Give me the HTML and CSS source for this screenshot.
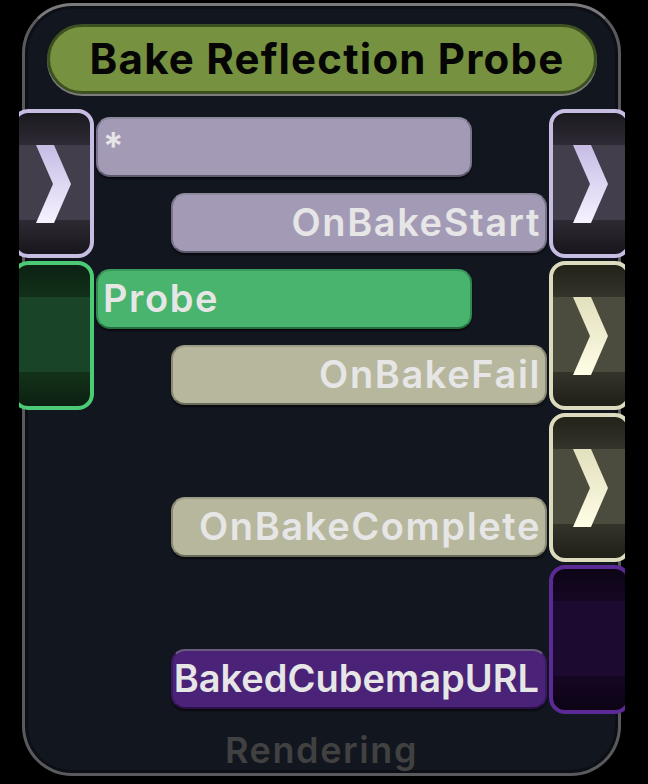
FILE: index.html
```html
<!DOCTYPE html>
<html lang="en">
<head>
    <meta charset="UTF-8">
    <title>Bake Reflection Probe</title>
    <link rel="stylesheet" href="styles.css">
</head>
<body>
<div class="stage">
    <div class="node">
        <div class="title">Bake Reflection Probe</div>
        <div class="ports">
            <div class="col col-in">
                <div class="port port-exec">
                    <svg class="chev" viewBox="0 0 35 78"><defs><linearGradient id="gl" x1="0" y1="0" x2="0" y2="1"><stop offset="0" stop-color="#c6bce4"/><stop offset="1" stop-color="#f6f2ff"/></linearGradient></defs><polygon points="0,0 18,0 35,39 18,78 0,78 17,39" fill="url(#gl)"/></svg>
                </div>
                <div class="port port-probe"></div>
            </div>
            <div class="col col-fields">
                <div class="pill pill-in pill-exec">*</div>
                <div class="pill pill-out pill-exec">OnBakeStart</div>
                <div class="pill pill-in pill-probe">Probe</div>
                <div class="pill pill-out pill-event">OnBakeFail</div>
                <div class="pill-gap"></div>
                <div class="pill pill-out pill-event">OnBakeComplete</div>
                <div class="pill-gap"></div>
                <div class="pill pill-out pill-url">BakedCubemapURL</div>
            </div>
            <div class="col col-out">
                <div class="port port-exec">
                    <svg class="chev" viewBox="0 0 35 78"><polygon points="0,0 18,0 35,39 18,78 0,78 17,39" fill="url(#gl)"/></svg>
                </div>
                <div class="port port-event">
                    <svg class="chev" viewBox="0 0 35 78"><defs><linearGradient id="gk" x1="0" y1="0" x2="0" y2="1"><stop offset="0" stop-color="#e2e0bd"/><stop offset="1" stop-color="#fffde6"/></linearGradient></defs><polygon points="0,0 18,0 35,39 18,78 0,78 17,39" fill="url(#gk)"/></svg>
                </div>
                <div class="port port-event">
                    <svg class="chev" viewBox="0 0 35 78"><polygon points="0,0 18,0 35,39 18,78 0,78 17,39" fill="url(#gk)"/></svg>
                </div>
                <div class="port port-url"></div>
            </div>
        </div>
        <div class="category">Rendering</div>
    </div>
</div>
</body>
</html>
```
FILE: styles.css
```css
html, body {
    margin: 0;
    padding: 0;
    background: #000;
    font-family: Inter, "Open Sans", sans-serif;
}

.stage {
    margin-left: 19px;
    width: 606px;
    height: 784px;
    padding-top: 3px;
    box-sizing: border-box;
    overflow: hidden;
}

.node {
    margin-left: 3px;
    width: 599px;
    height: 773px;
    box-sizing: border-box;
    border: 3px solid #5a5a5c;
    border-top-color: #7a7a7c;
    border-radius: 50px;
    background: #12161f;
    box-shadow: inset 0 0 0 3px #0c0f16;
}

.title {
    margin: 18px 21px 0 22px;
    height: 70px;
    box-sizing: border-box;
    border: 3px solid #3d5020;
    border-radius: 35px;
    background: #76913f;
    box-shadow: 0 2px 0 #7c7c7c;
    color: #050505;
    font-size: 42px;
    font-weight: 700;
    line-height: 63px;
    text-align: center;
    padding-left: 10px;
    letter-spacing: 1.2px;
}

.ports {
    display: grid;
    grid-template-columns: 82px 1fr 82px;
    margin: 15px -13px 0 -13px;
}

.col {
    display: flex;
    flex-direction: column;
}

.col-in, .col-out {
    gap: 3px;
}

.col-fields {
    padding-top: 8px;
    gap: 16px;
}

.port {
    height: 149px;
    box-sizing: border-box;
    border: 4px solid;
    border-radius: 16px;
    display: flex;
    align-items: center;
    justify-content: center;
}

.chev {
    width: 35px;
    height: 78px;
}

.port-exec {
    border-color: #c7bde3;
    background: linear-gradient(to bottom, #1b191f 0%, #2f2b35 23%, #433e4c 23%, #433e4c 76%, #2e2a34 76%, #18161c 100%);
}

.port-probe {
    border-color: #4ccb77;
    background: linear-gradient(to bottom, #0c2213 0%, #123119 23%, #1a4427 23%, #1a4427 76%, #133219 76%, #0b2011 100%);
}

.port-event {
    border-color: #dcdbbd;
    background: linear-gradient(to bottom, #222219 0%, #34342b 23%, #4b4b3e 23%, #4b4b3e 76%, #34342b 76%, #1f1f18 100%);
}

.port-url {
    border-color: #5b2a96;
    background: linear-gradient(to bottom, #0d0517 0%, #150724 23%, #1d0a31 23%, #1d0a31 76%, #150724 76%, #0c0415 100%);
}

.pill {
    width: 376px;
    height: 60px;
    box-sizing: border-box;
    border: 2px solid;
    border-radius: 14px;
    box-shadow: 0 2px 2px rgba(0, 0, 0, 0.6);
    color: #e6e6e6;
    font-size: 38px;
    font-weight: 600;
    line-height: 55px;
    letter-spacing: 1.6px;
    white-space: nowrap;
}

.pill-gap {
    height: 60px;
}

.pill-in {
    margin-left: 2px;
    padding-left: 5px;
}

.pill-out {
    margin-left: auto;
    margin-right: 2px;
    padding-right: 4px;
    text-align: right;
}

.pill-exec {
    background: #a39bb6;
    border-color: #8e8aa0 #7a748c #5e586c;
}

.pill-probe {
    background: #48b46d;
    border-color: #3a9a5c #2f8a50 #256e40;
}

.pill-event {
    background: #b7b79d;
    border-color: #9c9c88 #8a8a76 #6c6c5c;
}

.pill-url {
    background: #4a2277;
    border-color: #6a5a80 #3a1a60 #2a1248;
    letter-spacing: 0;
    padding-right: 6px;
}

.category {
    margin-top: 16px;
    height: 40px;
    color: #414141;
    font-size: 36px;
    font-weight: 600;
    line-height: 40px;
    letter-spacing: 1.6px;
    text-align: center;
}
```
